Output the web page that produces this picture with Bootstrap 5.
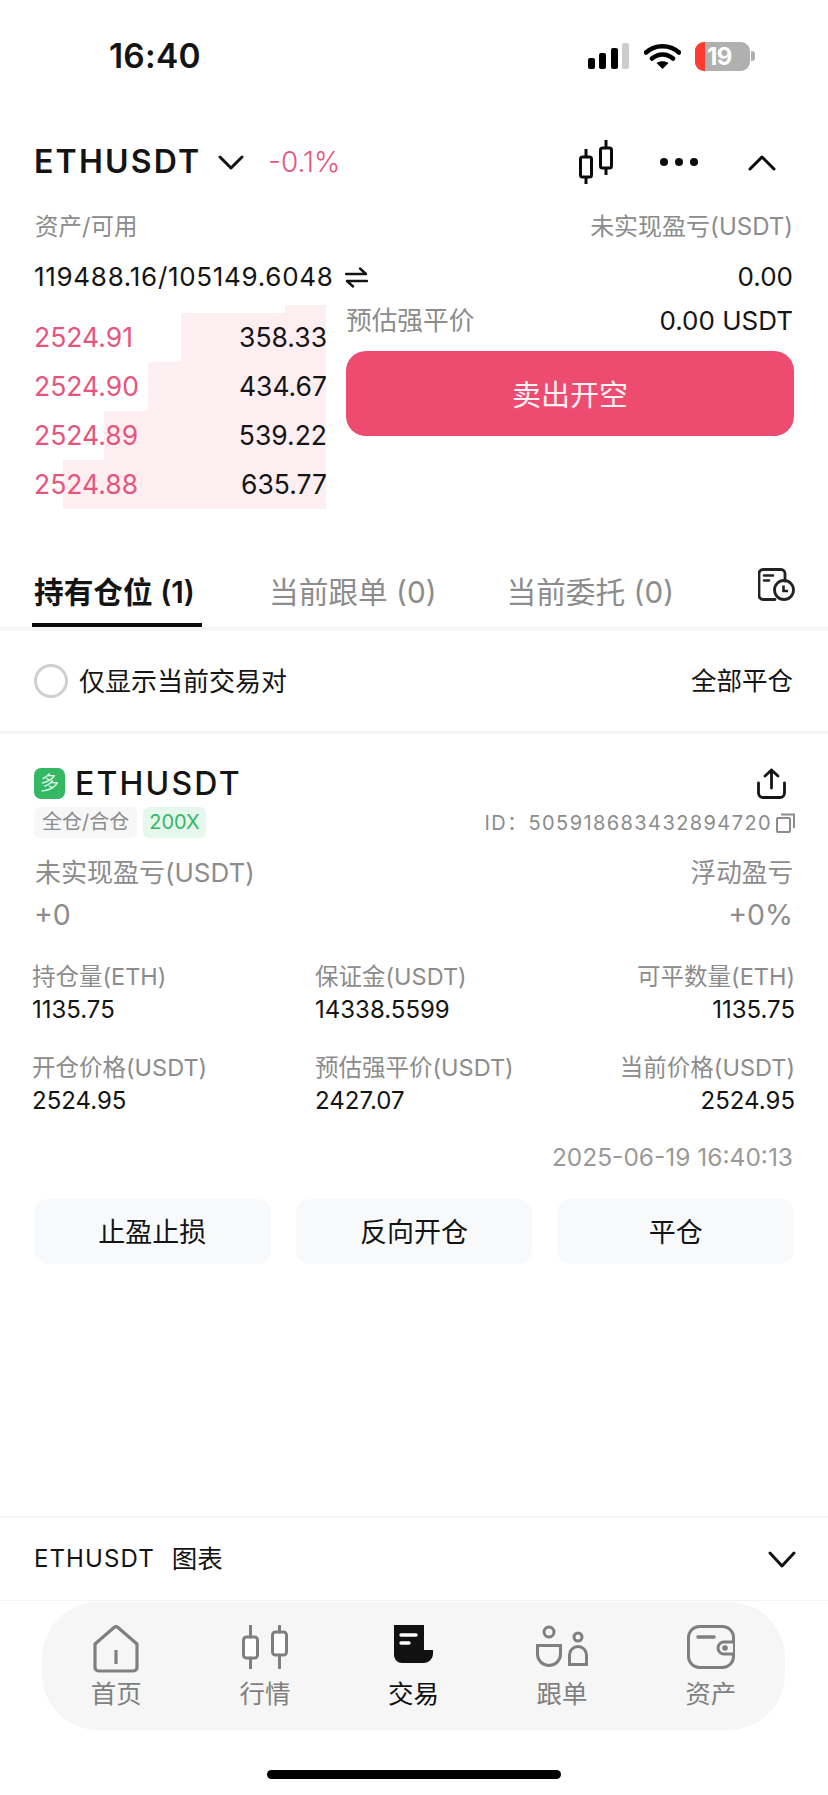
<!DOCTYPE html>
<html lang="zh">
<head>
<meta charset="utf-8">
<title>ETHUSDT</title>
<link href="https://cdn.jsdelivr.net/npm/bootstrap@5.3.0/dist/css/bootstrap.min.css" rel="stylesheet">
<style>
html,body{margin:0;background:#fff}
body{width:828px;height:1795px;overflow:hidden;font-family:"Inter","Noto Sans CJK SC",sans-serif;color:#141414;display:flex;flex-direction:column}
svg{display:block;flex:none}
.gr{color:#8c8c8c}
.pink{color:#e5557d}
.sbar{height:112px;padding:0 73px 0 109px}
.clock{font-size:33.500px;font-weight:600;line-height:1;letter-spacing:.2px;padding-top:2px}
.batt{width:55px;height:29px;border-radius:9px;background:#b0b0b0;overflow:hidden;position:relative;margin-left:15px}
.batt-red{position:absolute;left:0;top:0;bottom:0;width:10px;background:#ff3b30}
.batt-num{position:relative;color:#fff;font-size:24px;font-weight:700;line-height:29px;padding-left:12px;letter-spacing:-.5px}
.batt-nub{width:4px;height:10px;background:#b0b0b0;border-radius:0 3px 3px 0;margin-left:1px}
.wifi{margin-left:15px;margin-right:-1px}
.pad{padding-left:36px;padding-right:35px}
.hdr{height:44px;margin-top:28px;padding-left:34px}
.sym{font-size:32px;font-weight:600;letter-spacing:2.200px;line-height:1}
.chg{font-size:28px;margin-left:24px;font-weight:300}
.rowA{height:30px;margin-top:28px;line-height:30px;padding-left:35px}
.rowA span:first-child{font-size:23.500px}
.rowA span:last-child{font-size:24px}
.rowB{height:30px;margin-top:20px;font-size:26px;line-height:30px;padding-left:34px}
.rowB-n{letter-spacing:.7px}
.swap{margin-left:11px}
.book{margin-top:13px;height:203px;padding-left:36px}
.bookL{width:290px;flex:none}
.bookR{margin-left:20px;width:448px;flex:none}
.depthTop{height:8px;width:41px;margin-left:auto;background:#fdeef1}
.bk{height:49px;position:relative;font-size:26.500px;line-height:49px;margin-left:-2px}
.bk-bar{position:absolute;top:0;bottom:0;right:0;background:#fdeef1}
.bk-t{position:relative}
.bk-q{margin-right:-1px}
.estm{height:31px;line-height:31px;padding-right:1px}
.estm span:first-child{font-size:25.700px}
.estm span:last-child{font-size:26px}
.sell{height:85px;width:448px;margin-top:15px;padding-top:10px;border-radius:20px;background:#ee4b70;border:0;font-size:29px;color:#fff2f5;display:block}
.tabs{margin-top:42px;height:81px;border-bottom:4px solid #f6f6f6;padding:0 33px 0 32px}
.tab{height:77px;padding:7px 0 0 0;font-size:29.700px;color:#8c8c8c;line-height:70px}
.tab.on{color:#141414;font-weight:600;border-bottom:4px solid #0a0a0a;width:170px;padding-left:2px}
.tabgap1{margin-left:67px}
.tabgap2{margin-left:70px}
.filter{height:100px;font-size:26px}
.filter span.ms-auto{font-size:25.500px}
.ring{width:34px;height:34px;border:3px solid #cfcfcf;border-radius:50%;margin-right:11px;margin-left:-2px}
.sep{height:3px;background:#f6f6f6}
.posT{margin-top:34px;height:31px}
.longb{width:31px;height:31px;border-radius:7px;background:#35b864;color:#dff7e6;font-size:19px;line-height:31px;text-align:center;margin-left:-2px}
.psym{font-size:32px;font-weight:500;letter-spacing:2.200px;line-height:35px;margin-left:10px}
.posM{margin-top:8px;height:31px;padding-left:34px;padding-right:33px}
.chip{height:31px;line-height:31px;border-radius:6px;padding:0 8px}
.chipA{background:#f7f7f7;color:#8c8c8c;font-size:20px}
.chipB{background:#e6f7ed;color:#35b864;margin-left:6px;font-size:20px;padding:0 6px}
.pid{font-size:20px;letter-spacing:1.400px;color:#8c8c8c;margin-right:4px}
.plA{margin-top:20px;height:30px;line-height:30px;padding-left:35px}
.plA span:first-child{font-size:26px}
.plA span:last-child{font-size:25.600px}
.plB{margin-top:9px;height:36px;font-size:28.500px;line-height:36px;padding-left:34px}
.fields{display:grid;grid-template-columns:283px 1fr auto;padding:0 33px 0 32px;margin-top:30px;row-gap:30px}
.lb{height:28px;font-size:23.500px;line-height:28px;color:#8c8c8c}
.vl{height:28px;font-size:24px;line-height:28px;margin-top:5px}
.stamp{margin-top:28px;height:28px;font-size:24.500px;line-height:28px;color:#999;padding-right:35px}
.acts{margin-top:28px;padding:0 34px;gap:25px}
.act{width:237px;height:65px;background:#f8f9fb;border:0;border-radius:14px;font-size:27px;color:#141414;padding:3px 0 0}
.line2{height:2px;background:#f3f3f3;margin-top:auto}
.chart{height:82px;padding-left:34px}
.chart span:first-child{font-size:24px;letter-spacing:1.100px}
.chart span:nth-child(2){font-size:25.500px;margin-left:17px}
.line1{height:1px;background:#f3f3f3}
.tabbar{margin:1px 43px 0 42px;height:128px;border-radius:56px;background:#f6f6f6}
.navi{width:148.600px;height:128px;padding-top:23px;color:#7f7f7f;font-size:25.500px;line-height:30px}
.navi.on{color:#0f0f0f}
.navic{height:50px;margin-bottom:4px}
.homebar{width:294px;height:9px;border-radius:5px;background:#000;margin:40px auto 16px}
</style>
</head>
<body>
<div class="sbar d-flex align-items-center justify-content-between">
  <div class="clock">16:40</div>
  <div class="d-flex align-items-center">
    <svg width="41" height="26" viewBox="0 0 41 26"><rect x="0" y="15" width="7" height="11" rx="2" fill="#000"/><rect x="11" y="10" width="7" height="16" rx="2" fill="#000"/><rect x="23" y="5" width="7" height="21" rx="2" fill="#000"/><rect x="34" y="0" width="7" height="26" rx="2" fill="#ccc"/></svg>
    <svg class="wifi" width="37" height="26" viewBox="0 0 37 26"><path d="M2 9.500C11 1 26 1 35 9.500M8 15.500C14 10 23 10 29 15.500" fill="none" stroke="#000" stroke-width="4.500" stroke-linecap="round"/><path d="M12.500 20C16 17.500 21 17.500 24.500 20L18.500 26Z" fill="#000"/></svg>
    <div class="batt"><div class="batt-red"></div><div class="batt-num">19</div></div>
    <div class="batt-nub"></div>
  </div>
</div>

<div class="hdr pad d-flex align-items-center">
  <div class="sym">ETHUSDT</div>
  <svg style="margin-left:17px" width="26" height="15" viewBox="0 0 26 15"><path d="M2 2L13 13L24 2" fill="none" stroke="#141414" stroke-width="3" stroke-linecap="round" stroke-linejoin="round"/></svg>
  <div class="chg pink">-0.1%</div>
  <svg class="ms-auto" width="34" height="44" viewBox="0 0 34 44"><g fill="none" stroke="#0a0a0a" stroke-width="3"><rect x="1.500" y="17" width="11" height="20" rx="2"/><rect x="21.500" y="8" width="11" height="20" rx="2"/><path d="M7 9V17M7 37V44M27 0V8M27 28V35"/></g></svg>
  <svg style="margin-left:47px" width="38" height="8" viewBox="0 0 38 8"><circle cx="4" cy="4" r="4" fill="#0a0a0a"/><circle cx="19" cy="4" r="4" fill="#0a0a0a"/><circle cx="34" cy="4" r="4" fill="#0a0a0a"/></svg>
  <svg style="margin-left:50px;margin-right:17px" width="28" height="17" viewBox="0 0 28 17"><path d="M2 15L14 3L26 15" fill="none" stroke="#0a0a0a" stroke-width="3" stroke-linecap="round" stroke-linejoin="round"/></svg>
</div>

<div class="rowA pad d-flex justify-content-between gr"><span>资产/可用</span><span>未实现盈亏(USDT)</span></div>

<div class="rowB pad d-flex justify-content-between">
  <div class="d-flex align-items-center"><span class="rowB-n">119488.16/105149.6048</span>
    <svg class="swap" width="23" height="21" viewBox="0 0 23 21"><path d="M1 7H21L15 1.500M22 14H2L8 19.500" fill="none" stroke="#141414" stroke-width="2.400" stroke-linecap="round" stroke-linejoin="round"/></svg>
  </div>
  <span>0.00</span>
</div>

<div class="book d-flex">
  <div class="bookL">
    <div class="depthTop"></div>
    <div class="bk d-flex justify-content-between"><div class="bk-bar" style="width:145px"></div><span class="bk-t pink">2524.91</span><span class="bk-t bk-q">358.33</span></div>
    <div class="bk d-flex justify-content-between"><div class="bk-bar" style="width:178px"></div><span class="bk-t pink">2524.90</span><span class="bk-t bk-q">434.67</span></div>
    <div class="bk d-flex justify-content-between"><div class="bk-bar" style="width:222px"></div><span class="bk-t pink">2524.89</span><span class="bk-t bk-q">539.22</span></div>
    <div class="bk d-flex justify-content-between"><div class="bk-bar" style="width:263px"></div><span class="bk-t pink">2524.88</span><span class="bk-t bk-q">635.77</span></div>
  </div>
  <div class="bookR">
    <div class="estm d-flex justify-content-between"><span class="gr">预估强平价</span><span>0.00 USDT</span></div>
    <button class="sell btn" type="button">卖出开空</button>
  </div>
</div>

<div class="tabs d-flex">
  <div class="tab on">持有仓位 (1)</div>
  <div class="tab tabgap1">当前跟单 (0)</div>
  <div class="tab tabgap2">当前委托 (0)</div>
  <svg class="ms-auto" style="margin-top:18px" width="37" height="33" viewBox="0 0 37 33"><g fill="none" stroke="#222" stroke-width="2.800" stroke-linecap="round"><path d="M17 31.500H5a4 4 0 0 1-4-4V5.500a4 4 0 0 1 4-4H23a4 4 0 0 1 4 4V13"/><circle cx="26" cy="22" r="9.500"/></g><path d="M6 7.500H15M6 12.500H11" stroke="#222" stroke-width="2.600" stroke-linecap="round"/><path d="M25.500 17.500V23H30" fill="none" stroke="#222" stroke-width="2.600"/></svg>
</div>

<div class="filter pad d-flex align-items-center">
  <div class="ring"></div><span>仅显示当前交易对</span><span class="ms-auto">全部平仓</span>
</div>
<div class="sep"></div>

<div class="posT pad d-flex align-items-center">
  <div class="longb">多</div>
  <div class="psym">ETHUSDT</div>
  <svg class="ms-auto" style="margin-right:7px" width="29" height="31" viewBox="0 0 29 31"><g fill="none" stroke="#141414" stroke-width="2.800" stroke-linecap="round" stroke-linejoin="round"><path d="M14.500 2V20M8 8L14.500 2L21 8"/><path d="M1.500 15V25a4.500 4.500 0 0 0 4.500 4.500H23a4.500 4.500 0 0 0 4.500-4.500V15"/></g></svg>
</div>
<div class="posM d-flex align-items-center">
  <div class="chip chipA">全仓/合仓</div>
  <div class="chip chipB">200X</div>
  <div class="pid ms-auto">ID：505918683432894720</div>
  <svg width="19" height="20" viewBox="0 0 19 20"><g fill="none" stroke="#8c8c8c" stroke-width="2"><rect x="1" y="5" width="13" height="14" rx="1"/><path d="M5 1.500H18V15"/></g></svg>
</div>

<div class="plA pad d-flex justify-content-between gr"><span>未实现盈亏(USDT)</span><span>浮动盈亏</span></div>
<div class="plB pad d-flex justify-content-between gr"><span>+0</span><span>+0%</span></div>

<div class="fields">
  <div><div class="lb">持仓量(ETH)</div><div class="vl">1135.75</div></div>
  <div><div class="lb">保证金(USDT)</div><div class="vl">14338.5599</div></div>
  <div class="text-end"><div class="lb">可平数量(ETH)</div><div class="vl">1135.75</div></div>
  <div><div class="lb">开仓价格(USDT)</div><div class="vl">2524.95</div></div>
  <div><div class="lb">预估强平价(USDT)</div><div class="vl">2427.07</div></div>
  <div class="text-end"><div class="lb">当前价格(USDT)</div><div class="vl">2524.95</div></div>
</div>

<div class="stamp text-end">2025-06-19 16:40:13</div>

<div class="acts d-flex">
  <button class="act btn" type="button">止盈止损</button>
  <button class="act btn" type="button">反向开仓</button>
  <button class="act btn" type="button">平仓</button>
</div>

<div class="line2"></div>
<div class="chart pad d-flex align-items-center">
  <span>ETHUSDT</span><span>图表</span>
  <svg class="ms-auto" style="margin-right:-3px" width="28" height="17" viewBox="0 0 28 17"><path d="M2 2L14 15L26 2" fill="none" stroke="#141414" stroke-width="3" stroke-linecap="round" stroke-linejoin="round"/></svg>
</div>
<div class="line1"></div>

<div class="tabbar d-flex">
  <div class="navi d-flex flex-column align-items-center"><div class="navic">
    <svg width="46" height="48" viewBox="0 0 46 48"><path d="M2 19L21 2.500a3 3 0 0 1 4 0L44 19V42.500a3.500 3.500 0 0 1-3.500 3.500H5.500A3.500 3.500 0 0 1 2 42.500Z" fill="none" stroke="#7f7f7f" stroke-width="3.200" stroke-linejoin="round"/><path d="M23 25V39" stroke="#7f7f7f" stroke-width="3.200"/></svg>
  </div><span>首页</span></div>
  <div class="navi d-flex flex-column align-items-center"><div class="navic">
    <svg width="46" height="44" viewBox="0 0 46 44"><g fill="#fff" stroke="#7f7f7f" stroke-width="3"><rect x="1.500" y="12" width="14" height="21" rx="3"/><rect x="30.500" y="7" width="14" height="23" rx="3"/></g><path d="M8.500 1V12M8.500 33V43M37.500 1V7M37.500 30V43" stroke="#7f7f7f" stroke-width="3" stroke-linecap="round"/></svg>
  </div><span>行情</span></div>
  <div class="navi on d-flex flex-column align-items-center"><div class="navic">
    <svg width="39" height="39" viewBox="0 0 39 39"><path d="M0 0H30V25H39V29a9 9 0 0 1-9 9H8a8 8 0 0 1-8-8Z" fill="#111"/><path d="M7 10H22" stroke="#fff" stroke-width="3.400" stroke-linecap="round"/><path d="M7 18H15" stroke="#fff" stroke-width="3.400" stroke-linecap="round"/></svg>
  </div><span>交易</span></div>
  <div class="navi d-flex flex-column align-items-center"><div class="navic">
    <svg width="53" height="42" viewBox="0 0 53 42"><g fill="none" stroke="#7f7f7f" stroke-width="3"><circle cx="13" cy="7" r="5"/><path d="M1.500 20.500H24.500V29a11.500 11.500 0 0 1-23 0Z"/><circle cx="42" cy="12" r="4"/><path d="M33.500 39.500V30a8.500 8.500 0 0 1 17 0V39.500Z"/></g></svg>
  </div><span>跟单</span></div>
  <div class="navi d-flex flex-column align-items-center"><div class="navic">
    <svg width="48" height="44" viewBox="0 0 48 44"><rect x="1.500" y="1.500" width="45" height="41" rx="11" fill="none" stroke="#7f7f7f" stroke-width="3"/><path d="M11 12H27" stroke="#7f7f7f" stroke-width="3.600" stroke-linecap="round"/><path d="M46 17H37a6 6 0 0 0 0 12H46" fill="#f6f6f6" stroke="#7f7f7f" stroke-width="3"/><circle cx="38" cy="23" r="2.800" fill="#7f7f7f"/></svg>
  </div><span>资产</span></div>
</div>

<div class="homebar"></div>
</body>
</html>
